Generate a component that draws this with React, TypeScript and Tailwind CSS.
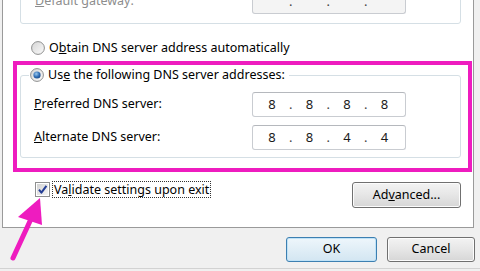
import React from "react";

const font = { fontFamily: '"Noto Sans", "Open Sans", sans-serif' };

function Radio({ checked, id }: { checked?: boolean; id: string }) {
  return (
    <svg width="14" height="14" viewBox="0 0 14 14" className="shrink-0">
      <defs>
        <linearGradient id={`rg-${id}`} x1="0" y1="0" x2="1" y2="1">
          <stop offset="0" stopColor="#d4d4d4" />
          <stop offset="1" stopColor="#fbfbfb" />
        </linearGradient>
        <radialGradient id={`rd-${id}`} cx="0.4" cy="0.35" r="0.7">
          <stop offset="0" stopColor="#9ccbf0" />
          <stop offset="0.6" stopColor="#2f6db4" />
          <stop offset="1" stopColor="#1d4a86" />
        </radialGradient>
      </defs>
      <circle cx="7" cy="7" r="6.4" fill={`url(#rg-${id})`} stroke="#8e8f8f" strokeWidth="1" />
      {checked && <circle cx="7" cy="7" r="3.6" fill={`url(#rd-${id})`} />}
    </svg>
  );
}

function Checkbox() {
  return (
    <svg width="15" height="15" viewBox="0 0 15 15" className="shrink-0">
      <defs>
        <linearGradient id="cb" x1="0" y1="0" x2="1" y2="1">
          <stop offset="0" stopColor="#d2d2d2" />
          <stop offset="1" stopColor="#f6f6f6" />
        </linearGradient>
      </defs>
      <rect x="0.5" y="0.5" width="14" height="14" fill="#fff" stroke="#8e8f8f" />
      <rect x="2" y="2" width="11" height="11" fill="url(#cb)" />
      <path d="M4 7.6 L6.4 10.6 L11.4 3.8" fill="none" stroke="#243e95" strokeWidth="2" strokeLinejoin="round" />
    </svg>
  );
}

function IpBox({ parts, disabled }: { parts: string[]; disabled?: boolean }) {
  return (
    <div
      className={`flex h-[25px] w-[154px] items-center rounded-[3px] border border-[#c9ccd1] border-t-[#b5b8bd] pl-[7px] text-[13px] text-[#1a1a1a] ${
        disabled ? "bg-[#f4f4f4]" : "bg-white"
      }`}
    >
      {parts.map((p, i) => (
        <React.Fragment key={i}>
          <span className="w-[24px] text-center">{p}</span>
          {i < 3 && <span className="w-[13.5px] text-center text-[#444]">.</span>}
        </React.Fragment>
      ))}
    </div>
  );
}

function Button({ children, primary, className = "" }: { children: React.ReactNode; primary?: boolean; className?: string }) {
  return (
    <div
      className={`flex h-[25px] items-center justify-center rounded-[3px] border text-[12.5px] text-black ${
        primary
          ? "border-[#3c7fb1] bg-gradient-to-b from-[#eef6fb] to-[#d3e6f2] shadow-[inset_0_0_0_1px_#bfe2f7]"
          : "border-[#707070] bg-gradient-to-b from-[#f3f3f3] via-[#e6e6e6] to-[#d6d6d6] shadow-[inset_0_0_0_1px_#fcfcfc]"
      } ${className}`}
    >
      {children}
    </div>
  );
}

export default function App() {
  return (
    <div className="relative h-[271px] w-[480px] overflow-hidden bg-[#f0f0f0] text-[12.5px]" style={font}>
      {/* Tab page */}
      <div className="-mt-[20px] ml-[2px] flex h-[248px] w-[472px] flex-col border-x border-b border-[#9a9a9a] bg-white">
        {/* Default gateway group (cut off) */}
        <div className="ml-[17px] flex h-[44px] w-[441px] items-end rounded-[3px] border border-[#d5dfe5] pb-[9px]">
          <span className="ml-[14px] w-[217px] pb-[3px] text-[#8d8d8d]">
            <span className="underline">D</span>efault gateway:
          </span>
          <IpBox parts={["", "", "", ""]} disabled />
        </div>

        {/* Obtain DNS automatically */}
        <div className="ml-[28px] mt-[16px] flex h-[16px] items-center gap-[4px] text-black">
          <Radio id="a" />
          <span>
            O<span className="underline">b</span>tain DNS server address automatically
          </span>
        </div>

        {/* Magenta highlight */}
        <div className="ml-[10px] mt-[5px] w-[459px] border-4 border-[#ee1cbf] pb-[10px]">
          <fieldset className="ml-[3px] mt-[1px] w-[441px] rounded-[3px] border border-[#d5dfe5] pb-[7px]">
            <legend className="ml-[8px] flex h-[18px] items-center gap-[4px] px-[1px] pr-[4px] text-black">
              <Radio id="b" checked />
              <span>
                Us<span className="underline">e</span> the following DNS server addresses:
              </span>
            </legend>
            <div className="flex flex-col gap-[8px] pt-[8px]">
              <div className="flex items-center">
                <span className="ml-[13px] w-[218px] text-black">
                  <span className="underline">P</span>referred DNS server:
                </span>
                <IpBox parts={["8", "8", "8", "8"]} />
              </div>
              <div className="flex items-center">
                <span className="ml-[13px] w-[218px] text-black">
                  <span className="underline">A</span>lternate DNS server:
                </span>
                <IpBox parts={["8", "8", "4", "4"]} />
              </div>
            </div>
          </fieldset>
        </div>

        {/* Validate + Advanced */}
        <div className="mt-[9px] flex items-start">
          <div className="ml-[32px] flex items-center gap-[2px]">
            <Checkbox />
            <span className="border border-dotted border-[#333] px-[1px] leading-[15px] text-black">
              Va<span className="underline">l</span>idate settings upon exit
            </span>
          </div>
          <Button className="ml-auto mr-[12px] mt-[1px] h-[26px] w-[109px]">
            Ad<span className="underline">v</span>anced...
          </Button>
        </div>
      </div>

      {/* Dialog buttons */}
      <div className="mt-[9px] flex justify-end gap-[10px] pr-[5px]">
        <Button primary className="w-[91px]">
          OK
        </Button>
        <Button className="w-[88px]">Cancel</Button>
      </div>
      <div className="mt-[6px] h-px w-full bg-[#d2d2d2]" />

      {/* Annotation arrow */}
      <svg className="absolute left-0 top-0" width="480" height="271" viewBox="0 0 480 271">
        <line x1="13" y1="258" x2="31" y2="219" stroke="#ee1cbf" strokeWidth="5" strokeLinecap="round" />
        <polygon points="40,198 18,217 42,225" fill="#ee1cbf" />
      </svg>
    </div>
  );
}
